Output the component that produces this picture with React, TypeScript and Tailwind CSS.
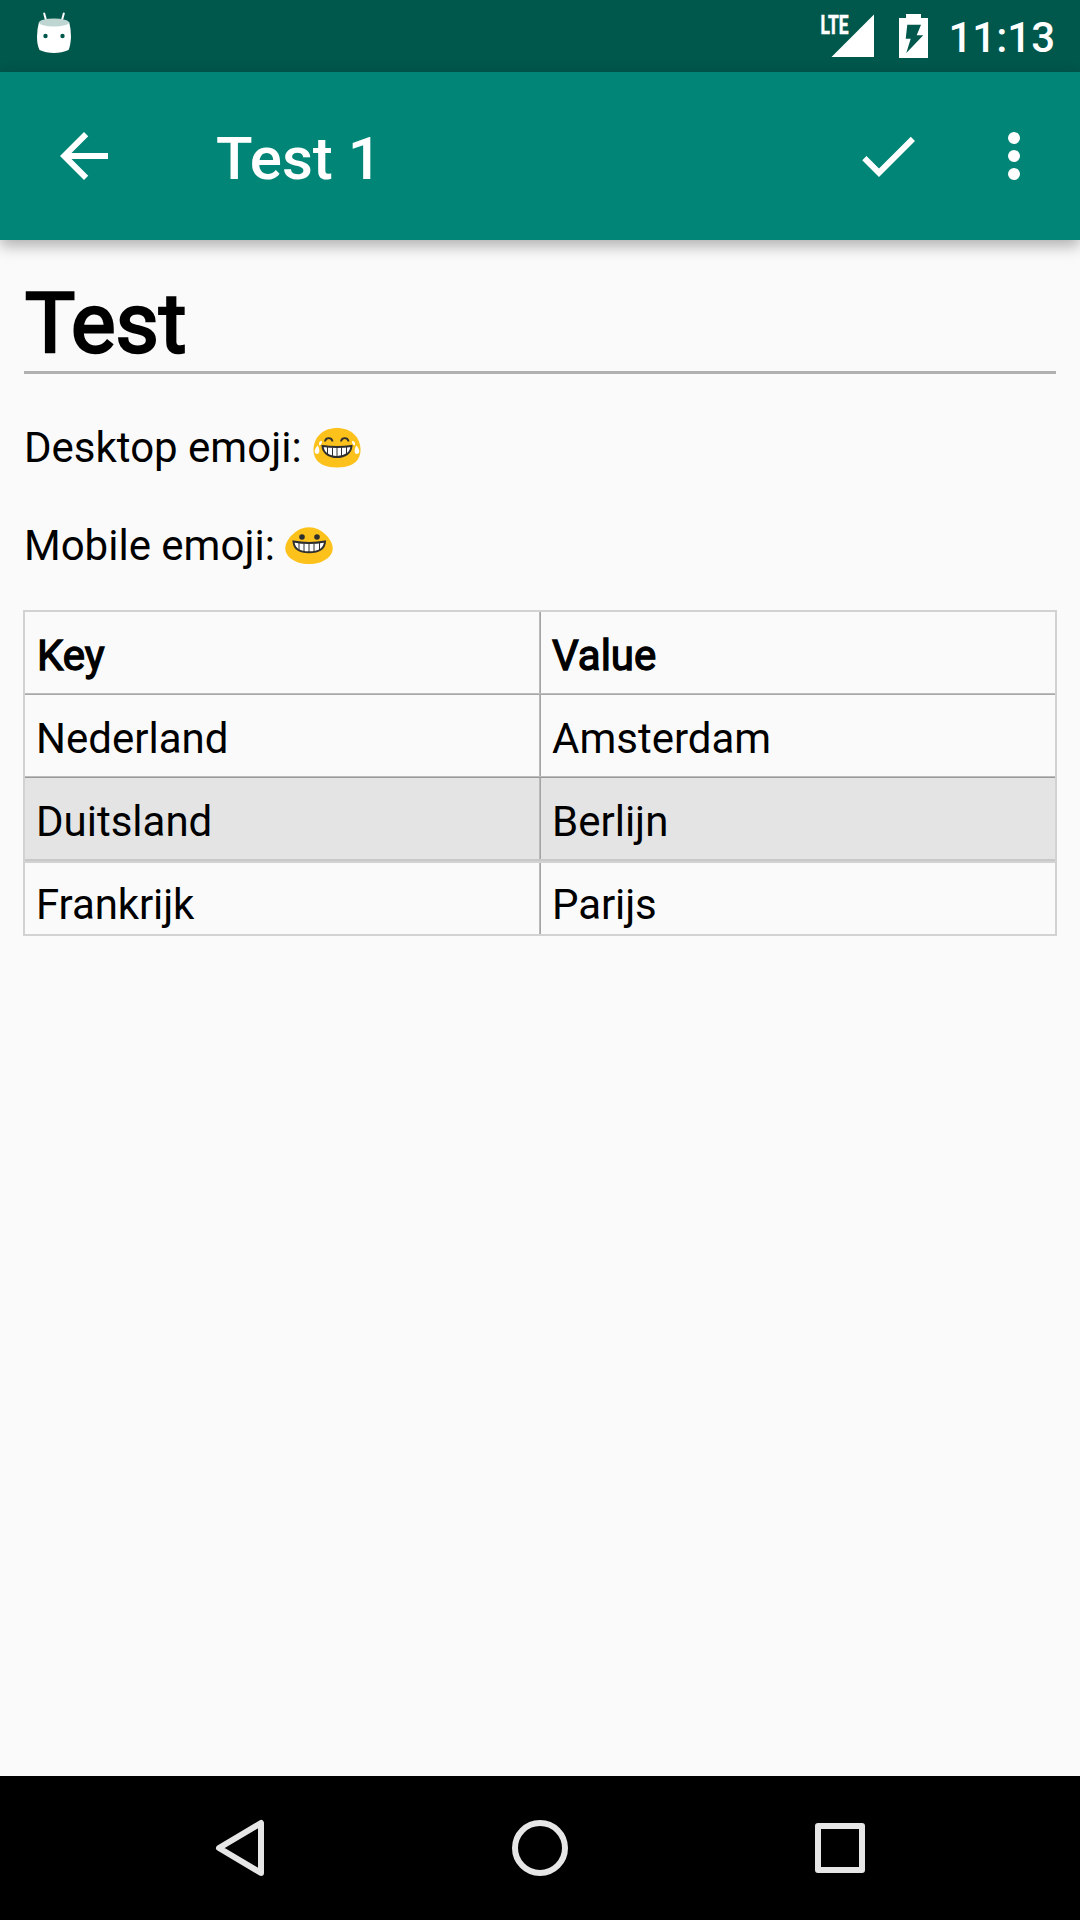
const rows = [
  { name: 'Nederland', value: 'Amsterdam', row: 'h-[83px] border-y border-t-[#a8a8a8] border-b-[#bcbcbc]', cell: 'pt-[19px]' },
  { name: 'Duitsland', value: 'Berlijn', row: 'h-[84px] border-t border-b-2 border-t-[#999999] border-b-[#c8c8c8] bg-[#e4e4e4]', cell: 'pt-[19px]' },
  { name: 'Frankrijk', value: 'Parijs', row: 'h-[75px] border-y-2 border-[#d2d2d2]', cell: 'pt-[17px] tracking-[-0.1px]' },
];

function StatusBar() {
  return (
    <header className="flex h-[72px] shrink-0 items-start bg-[#00574b] text-white">
      <svg className="ml-[36px] mt-[10px]" width="36" height="46" viewBox="36 10 36 46">
        <path d="M44.2 13.5l2.2 8M63.8 13.5l-2.2 8" stroke="white" strokeWidth="2" strokeLinecap="round" />
        <path d="M39 22Q54 28 69.200 22Q71 29 71 37Q70.500 46 68.500 50Q62 53 54 53Q46 53 39.500 50Q37 45 37 37Q37 29 39 22Z" fill="white" />
        <ellipse cx="54" cy="22.500" rx="15" ry="4" fill="#bfd5d2" />
        <circle cx="45.500" cy="36" r="2.200" fill="#00574b" />
        <circle cx="62.500" cy="36" r="2.200" fill="#00574b" />
      </svg>
      <svg className="ml-auto mt-[2px]" width="56" height="58" viewBox="820 2 56 58">
        <path d="M831.500 57H874V14.500Z" fill="white" />
        <text x="820.500" y="33.500" textLength="28" lengthAdjust="spacingAndGlyphs" fill="white" stroke="white" strokeWidth=".6" className="font-[Roboto] text-[26px] font-bold">LTE</text>
      </svg>
      <svg className="ml-[22px] mt-[12px]" width="30" height="48" viewBox="898 12 30 48">
        <path fillRule="evenodd" fill="white" d="M906 14H921V18H928V58H899V18H906ZM907.300 24.700L905.700 38.700H910.700L906.300 53L923.300 35.300H916.700L921 24.700Z" />
      </svg>
      <span className="ml-[20px] mr-[25px] mt-[13px] text-[42px] font-medium leading-[49px]">11:13</span>
    </header>
  );
}

function Toolbar() {
  return (
    <div className="relative z-10 flex h-[168px] shrink-0 items-center bg-[#008577] pl-[48px] pr-[30px] text-white shadow-[0_6px_14px_rgba(0,0,0,0.3)]">
      <svg width="72" height="72" viewBox="0 0 24 24" fill="currentColor">
        <path d="M20 11H7.830l5.590-5.590L12 4l-8 8 8 8 1.410-1.410L7.830 13H20v-2z" />
      </svg>
      <h1 className="ml-[96px] mt-[6px] text-[60px] font-medium leading-[70px]">Test 1</h1>
      <svg className="ml-auto" width="72" height="72" viewBox="0 0 24 24" fill="currentColor">
        <path d="M9 16.170L4.830 12l-1.420 1.410L9 19 21 7l-1.410-1.410z" />
      </svg>
      <svg className="ml-[54px]" width="72" height="72" viewBox="0 0 24 24" fill="currentColor">
        <circle cx="12" cy="6" r="2" />
        <circle cx="12" cy="12" r="2" />
        <circle cx="12" cy="18" r="2" />
      </svg>
    </div>
  );
}

function JoyEmoji() {
  return (
    <svg width="48" height="40" viewBox="0 0 48 40" role="img" aria-label="😂">
      <path d="M24 0C38 0 47.500 9 47.500 22C47.500 27 45.500 39.500 24 39.500C2.500 39.500 .5 27 .5 22C.5 9 10 0 24 0Z" fill="#fcc21b" />
      <path d="M12 13.500C12.500 9 19 9 19.500 13.500M28 13.500C28.500 9 35 9 35.500 13.500" stroke="#2f2f2f" strokeWidth="1.900" fill="none" />
      <path d="M9.500 18Q24 20 38.500 18C38 25 32 29 24 29C16 29 10 25 9.500 18Z" fill="white" stroke="#2f2f2f" strokeWidth="2" />
      <path d="M14.500 19v7M19.500 19.500v9M24 19.500v9.500M28.500 19.500v9M33.500 19v7" stroke="#2f2f2f" strokeWidth="1" />
      <path d="M9 13Q5 13 6.200 17.500Q9 17 9 13ZM39 13Q43 13 41.800 17.500Q39 17 39 13ZM4.500 17.500C0 23 1.500 26 4.500 26C7.500 25 6.500 20 4.500 17.500ZM43.500 17.500C48 23 46.500 26 43.500 26C40.500 25 41.500 20 43.500 17.500Z" fill="white" />
    </svg>
  );
}

function GrinEmoji() {
  return (
    <svg width="48" height="38" viewBox="0 0 48 38" role="img" aria-label="😀">
      <path d="M24 .3C37 .3 47.700 13 47.700 21.500C47.700 29 39 37 24 37C9 37 .3 29 .3 21.500C.3 13 11 .3 24 .3Z" fill="#fcc21b" />
      <circle cx="17" cy="10" r="2.800" fill="#2f2f2f" />
      <circle cx="32" cy="10" r="2.800" fill="#2f2f2f" />
      <path d="M8.500 14.500Q24 17.500 40 14.500C39.500 22 33 25.300 24 25.300C15 25.300 9 22 8.500 14.500Z" fill="white" stroke="#2f2f2f" strokeWidth="2" />
      <path d="M14 16v7M19 16.500v8.500M24 16.500v9M29 16.500v8.500M34.500 16v7" stroke="#2f2f2f" strokeWidth="1" />
    </svg>
  );
}

export default function App() {
  return (
    <div className="flex h-[1920px] w-[1080px] flex-col overflow-hidden bg-[#fafafa] font-[Roboto,sans-serif] text-black">
      <StatusBar />
      <Toolbar />
      <main className="flex flex-1 flex-col px-[24px] text-[42px] leading-[49px]">
        <h2 className="mt-[35px] h-[99px] border-b-3 border-[#b0b0b0] pl-px text-[84px] font-normal leading-[98px] [-webkit-text-stroke:2.6px_black]">Test</h2>
        <p className="mt-[49px] flex h-[49px]">
          Desktop emoji:<span className="ml-[11px] mt-[5px]"><JoyEmoji /></span>
        </p>
        <p className="mt-[49px] flex h-[49px]">
          Mobile emoji:<span className="ml-[10px] mt-[6px]"><GrinEmoji /></span>
        </p>
        <section className="-ml-px mt-[40px] w-[1034px] border-x-2 border-[#d2d2d2]">
          <div className="grid h-[84px] grid-cols-2 border-t-2 border-b border-b-[#bcbcbc] border-t-[#d2d2d2] [-webkit-text-stroke:1.3px_black]">
            <span className="border-r border-[#bababa] pl-[12px] pt-[19px]">Key</span>
            <span className="border-l border-[#a4a4a4] pl-[11px] pt-[19px]">Value</span>
          </div>
          {rows.map((r) => (
            <div key={r.name} className={`grid grid-cols-2 ${r.row}`}>
              <span className={`border-r border-[#bababa] pl-[11px] ${r.cell}`}>{r.name}</span>
              <span className={`border-l border-[#a4a4a4] pl-[11px] ${r.cell}`}>{r.value}</span>
            </div>
          ))}
        </section>
      </main>
      <nav className="flex h-[144px] shrink-0 items-center bg-black">
        <svg className="ml-[210px]" width="60" height="60" viewBox="210 1818 60 60">
          <path d="M261 1823V1873L219 1848Z" fill="none" stroke="#e6e6e6" strokeWidth="6" strokeLinejoin="round" />
        </svg>
        <svg className="ml-[240px]" width="60" height="60" viewBox="510 1818 60 60">
          <circle cx="540" cy="1848" r="25" fill="none" stroke="#e6e6e6" strokeWidth="6" />
        </svg>
        <svg className="ml-[240px]" width="60" height="60" viewBox="810 1818 60 60">
          <path d="M818 1826H862V1870H818Z" fill="none" stroke="#e6e6e6" strokeWidth="6" strokeLinejoin="round" />
        </svg>
      </nav>
    </div>
  );
}
